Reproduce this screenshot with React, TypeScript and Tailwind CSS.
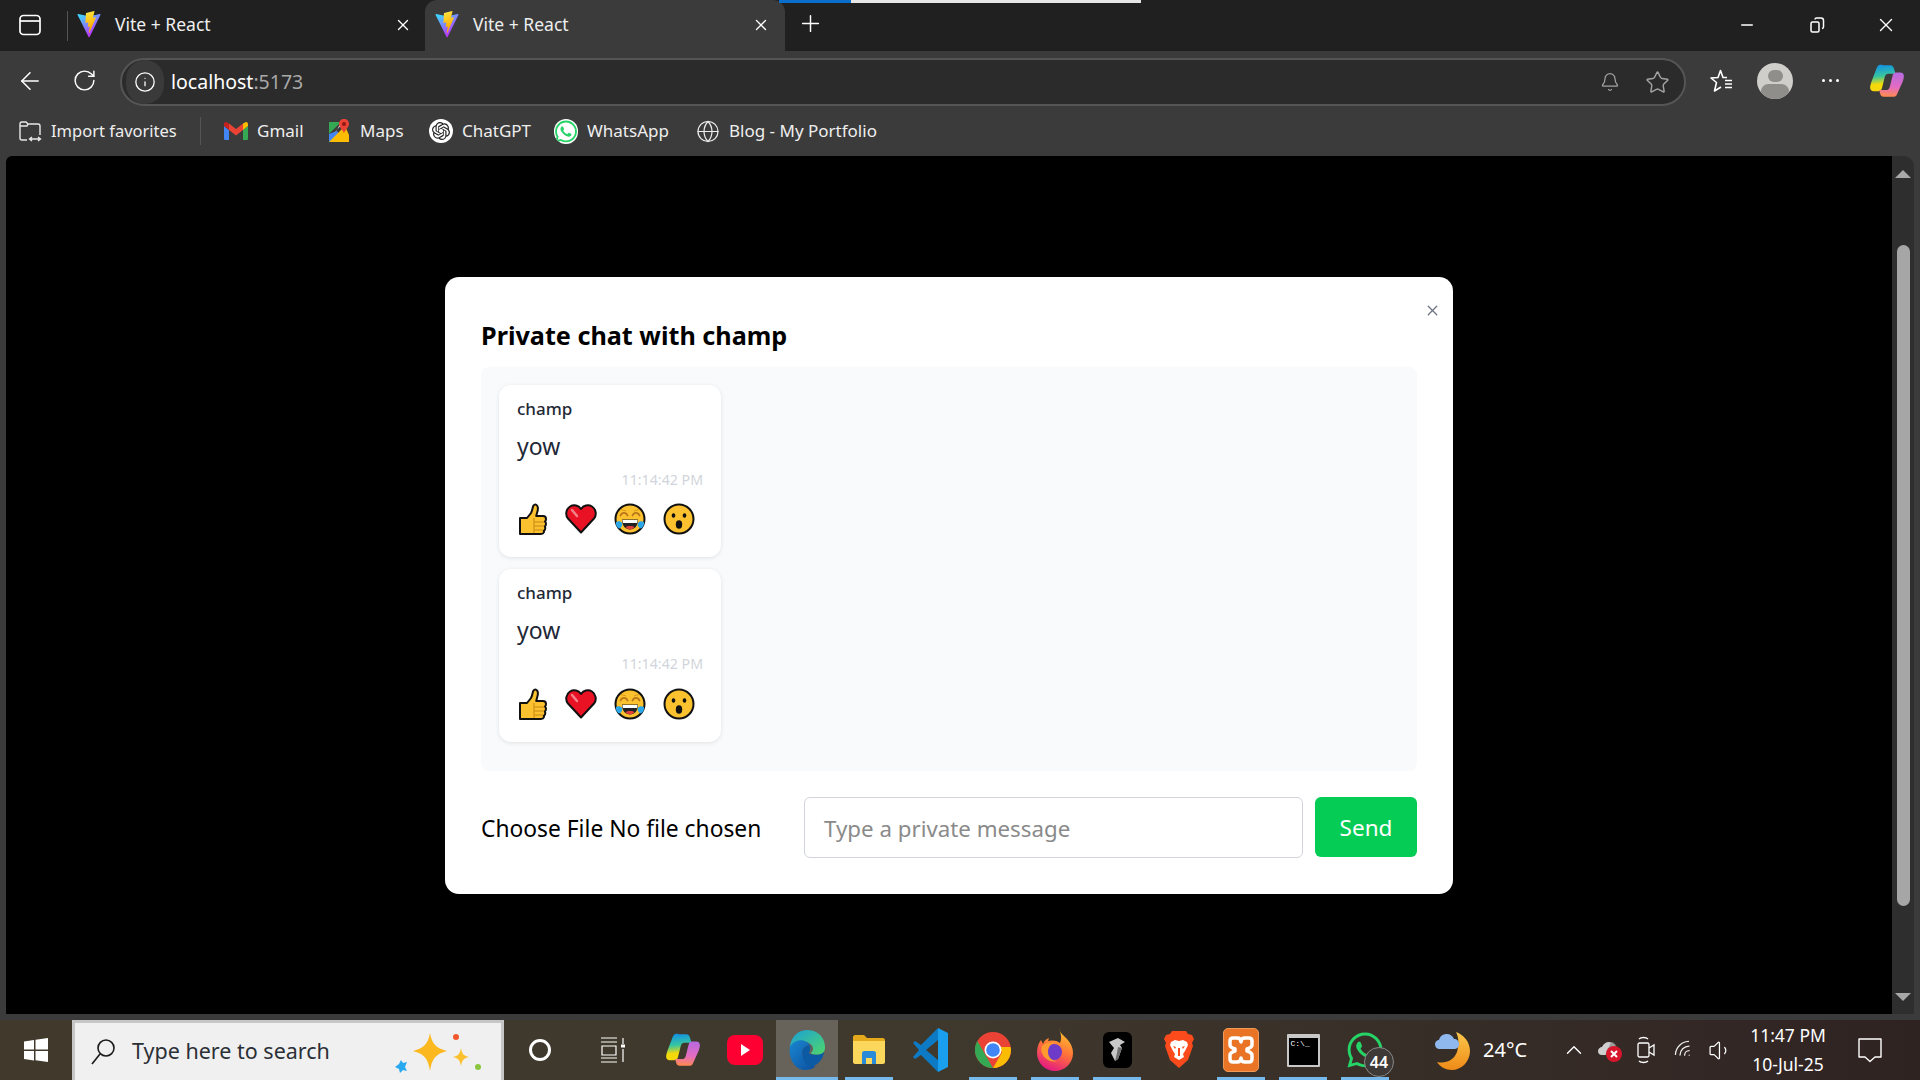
import React from "react";
import { ArrowLeft, RotateCw, Info, Bell, Star, X, Plus, Minus, Globe, ChevronUp, Wifi, Volume1 } from "lucide-react";
import { FaWhatsapp } from "react-icons/fa";
import { SiOpenai } from "react-icons/si";

const font = "font-['Noto_Sans','Open_Sans',sans-serif]";

function ViteIcon() {
  return (
    <svg width="24" height="27" viewBox="0 0 410 404" preserveAspectRatio="none" className="shrink-0">
      <defs>
        <linearGradient id="vg1" x1="0.1" y1="0.1" x2="0.6" y2="0.9"><stop offset="0" stopColor="#41D1FF" /><stop offset="1" stopColor="#BD34FE" /></linearGradient>
        <linearGradient id="vg2" x1="0.4" y1="0" x2="0.55" y2="0.8"><stop offset="0" stopColor="#FFEA83" /><stop offset="0.1" stopColor="#FFDD35" /><stop offset="1" stopColor="#FFA800" /></linearGradient>
      </defs>
      <path fill="url(#vg1)" d="M399.641 59.5246L215.643 388.545C211.844 395.338 202.084 395.378 198.228 388.618L10.5817 59.5563C6.38087 52.1896 12.6802 43.2665 21.0281 44.7586L205.223 77.6824C206.398 77.8924 207.601 77.8904 208.776 77.6763L389.119 44.8058C397.439 43.2894 403.768 52.1434 399.641 59.5246Z" />
      <path fill="url(#vg2)" d="M292.965 1.5744L156.801 28.2552C154.563 28.6937 152.906 30.5903 152.771 32.8664L144.395 174.33C144.198 177.662 147.258 180.248 150.51 179.498L188.42 170.749C191.967 169.931 195.172 173.055 194.443 176.622L183.18 231.775C182.422 235.487 185.907 238.661 189.532 237.56L212.947 230.446C216.577 229.344 220.065 232.527 219.297 236.242L201.398 322.875C200.278 328.294 207.486 331.249 210.492 326.603L212.5 323.5L323.454 102.072C325.312 98.3645 322.108 94.137 318.036 94.9228L279.014 102.454C275.347 103.161 272.227 99.746 273.262 96.1583L298.731 7.86689C299.767 4.27314 296.636 0.855181 292.965 1.5744Z" />
    </svg>
  );
}

function Copilot({ size = 32 }: { size?: number }) {
  return (
    <svg width={size} height={size} viewBox="0 0 32 32">
      <defs>
        <linearGradient id="cp1" x1="0.2" y1="0" x2="0.3" y2="1"><stop offset="0" stopColor="#0f8ee8" /><stop offset="0.45" stopColor="#37c6a0" /><stop offset="0.75" stopColor="#f5d90a" /></linearGradient>
        <linearGradient id="cp2" x1="0.6" y1="0" x2="0.5" y2="1"><stop offset="0" stopColor="#b86ae0" /><stop offset="0.6" stopColor="#e46cc0" /><stop offset="1" stopColor="#ff8a50" /></linearGradient>
      </defs>
      <path fill="url(#cp1)" d="M12 2h7c1.500 0 2.500 1 3 2.500l1.500 5h-6c-2 0-3 1-3.500 3l-2.500 10c-.4 1.500-1.500 2.500-3 2.500H4c-1.500 0-3-1-3-3 0-1 .2-2.500 1-5l5-13c1-2.500 2.500-2.500 5-2.500z" />
      <path fill="url(#cp2)" d="M20 30h-7c-1.500 0-2.500-1-3-2.500l-1-3.500h6c2 0 3-1 3.500-3l2.500-10c.4-1.500 1.500-2.500 3-2.500h4c1.500 0 3 1 3 3 0 1-.2 2.500-1 5l-5 11c-1 2.500-2.500 2.500-5 2.500z" />
    </svg>
  );
}

function Gmail() {
  return (
    <svg width="24" height="20" viewBox="0 0 24 18">
      <path fill="#4285f4" d="M1 18h4V8L0 4v12.500C0 17.300.500 18 1 18z" />
      <path fill="#34a853" d="M19 18h4c.6 0 1-.7 1-1.500V4l-5 4z" />
      <path fill="#fbbc04" d="M19 1.500V8l5-4V2c0-2-2-2.500-3-1.600z" />
      <path fill="#ea4335" d="M5 8V1.500l7 5.500 7-5.500V8l-7 5.500z" />
      <path fill="#c5221f" d="M0 2v2l5 4V1.500L3 .400C2-.5 0 0 0 2z" />
    </svg>
  );
}

function MapsIcon() {
  return (
    <svg width="22" height="24" viewBox="0 0 22 24">
      <path fill="#34a853" d="M1 3h12L1 15z" />
      <path fill="#4285f4" d="M1 15v8h9l4-4-5-7z" />
      <path fill="#fbbc04" d="M1 23L17 7l4 9v7z" />
      <path fill="#e8eaed" d="M9 11L13 3h3L5 15z" />
      <path fill="#ea4335" d="M16 0c-3 0-5 2-5 5 0 3 3 5 5 9 2-4 5-6 5-9 0-3-2-5-5-5z" />
      <circle cx="16" cy="5" r="2" fill="#8e1b12" />
    </svg>
  );
}

function ThumbEmoji() {
  return (
    <svg width="32" height="32" viewBox="0 0 32 32">
      <path fill="#fcc12e" stroke="#111" strokeWidth="2" strokeLinejoin="round" d="M4 15h7l4-5c1-2 1.500-4 2-6.500 .3-1.500 2-2.500 3.500-1.500 2 1.300 1.500 5 .5 8l-.8 3H27c2 0 3 1.500 3 3 0 1-.4 2-1 2.500 .6 .6 1 1.500 1 2.500s-.5 2-1.200 2.600c.3 .5 .5 1 .5 1.700 0 1-.6 2-1.500 2.500 .2 .5 .3 1 .1 1.500-.4 1.200-1.500 1.700-2.900 1.700H4z" />
      <path fill="none" stroke="#d99a1c" strokeWidth="1.500" d="M18 15v15M18 19h10M18 23h10M18 27h9" />
    </svg>
  );
}

function HeartEmoji() {
  return (
    <svg width="32" height="32" viewBox="0 0 32 32">
      <path fill="#e81224" stroke="#111" strokeWidth="2" strokeLinejoin="round" d="M16 29.500L3 15.500C0 12 1 6 5 3.500c4-2.300 8.500-1 11 2.500 2.500-3.500 7-4.800 11-2.500 4 2.500 5 8.500 2 12z" />
      <path fill="none" stroke="#f4808a" strokeWidth="2.500" strokeLinecap="round" d="M7 7l5 6" />
    </svg>
  );
}

function JoyEmoji() {
  return (
    <svg width="32" height="32" viewBox="0 0 32 32">
      <circle cx="16" cy="16" r="14.500" fill="#fcc12e" stroke="#111" strokeWidth="2" />
      <path fill="none" stroke="#b8771a" strokeWidth="1.800" strokeLinecap="round" d="M6.500 12.500C8 9 12 9 13.500 12.500M18.500 12.500C20 9 24 9 25.500 12.500" />
      <path fill="none" stroke="#d99a1c" strokeWidth="1" d="M7 6.500l5 1.500M25 6.500l-5 1.500" />
      <path fill="#222" d="M8 16.500h16c0 6.500-3.500 10-8 10s-8-3.500-8-10z" />
      <path fill="#fff" d="M8.500 17h15c0 1-.2 2-.5 3H9c-.3-1-.5-2-.5-3z" />
      <path fill="#e0413a" d="M11.500 24c1.500-1.500 7.500-1.500 9 0-1 1.500-3 2.500-4.500 2.500s-3.500-1-4.500-2.500z" />
      <path fill="#2aa7e8" d="M2 19c2-1.500 5-1 6 1s-.5 5-3 5.500C3 24.500 1.500 22 2 19zM30 19c-2-1.500-5-1-6 1s.5 5 3 5.500c2-1 3.500-3.500 3-6.500z" />
    </svg>
  );
}

function WowEmoji() {
  return (
    <svg width="32" height="32" viewBox="0 0 32 32">
      <circle cx="16" cy="16" r="14.500" fill="#fcc12e" stroke="#111" strokeWidth="2" />
      <ellipse cx="10.500" cy="12.500" rx="1.800" ry="2.300" fill="#111" />
      <ellipse cx="21.500" cy="12.500" rx="1.800" ry="2.300" fill="#111" />
      <ellipse cx="16" cy="21.500" rx="3.200" ry="4.200" fill="#111" />
    </svg>
  );
}

function MessageCard({ tall }: { tall?: boolean }) {
  return (
    <div className={`w-[222px] bg-white rounded-[12px] shadow-[0_1px_4px_rgba(0,0,0,0.1)] px-[18px] pt-[11px] flex flex-col ${tall ? "h-[173px]" : "h-[172px]"}`}>
      <div className="text-[17px] leading-[26px] font-medium text-[#1f2937]">champ</div>
      <div className="text-[23px] leading-[32px] mt-[8px] text-[#1f2937]">yow</div>
      <div className="text-[14.200px] leading-[20px] mt-[8px] text-right text-[#d1d5db]">11:14:42 PM</div>
      <div className={`flex items-center gap-[17px] -ml-[1px] ${tall ? "mt-[14px]" : "mt-[13px]"}`}>
        <ThumbEmoji />
        <HeartEmoji />
        <JoyEmoji />
        <WowEmoji />
      </div>
    </div>
  );
}

function Bookmark({ icon, label, w }: { icon: React.ReactNode; label: string; w: string }) {
  return (
    <div className={`flex items-center gap-[9px] ${w}`}>
      <div className="w-[24px] flex justify-center shrink-0">{icon}</div>
      <span className="text-[17px] text-[#eeeeee] whitespace-nowrap">{label}</span>
    </div>
  );
}

function TaskSlot({ children, active, highlight, w = "w-[62px]" }: { children?: React.ReactNode; active?: boolean; highlight?: boolean; w?: string }) {
  return (
    <div className={`relative ${w} h-full flex items-center justify-center shrink-0 ${highlight ? "bg-[#67635a]" : ""}`}>
      {children}
      {active && <div className={`absolute bottom-0 h-[3px] bg-[#76b9ed] ${highlight ? "left-0 right-0" : "left-[7px] right-[7px]"}`} />}
    </div>
  );
}

export default function App() {
  return (
    <div className={`w-screen h-screen overflow-hidden flex flex-col bg-black ${font}`}>
      {/* Tab strip */}
      <div className="relative h-[51px] shrink-0 bg-[#202020] flex items-end">
        <div className="absolute top-0 left-[779px] w-[72px] h-[3px] bg-[#0a6ecc]" />
        <div className="absolute top-0 left-[851px] w-[290px] h-[3px] bg-[#e6e6e6]" />
        <div className="w-[67px] h-full flex items-center pb-[2px] pl-[19px]">
          <svg width="22" height="22" viewBox="0 0 22 22" fill="none" stroke="#ffffff" strokeWidth="1.700"><rect x="1" y="1.500" width="20" height="19" rx="3.500" /><path d="M1 7h20" /></svg>
        </div>
        <div className="w-px h-[30px] bg-[#555555] self-center" />
        <div className="w-[357px] h-full flex items-center pl-[9px] pr-[13px] pb-[2px]">
          <ViteIcon />
          <span className="ml-[14px] text-[17.500px] text-[#eeeeee]">Vite + React</span>
          <X className="ml-auto text-white" size={18} strokeWidth={1.800} />
        </div>
        <div className="w-[360px] h-[51px] bg-[#3b3b3b] rounded-t-[12px] flex items-center pl-[10px] pr-[15px] pb-[2px]">
          <ViteIcon />
          <span className="ml-[14px] text-[17.500px] text-[#eeeeee]">Vite + React</span>
          <X className="ml-auto text-white" size={18} strokeWidth={1.800} />
        </div>
        <div className="ml-[12px] h-full flex items-center pb-[4px]">
          <Plus className="text-white" size={27} strokeWidth={1.300} />
        </div>
        <div className="ml-auto h-full flex items-center text-white pb-[2px]">
          <div className="w-[70px] flex justify-center"><Minus size={18} strokeWidth={2} /></div>
          <div className="w-[70px] flex justify-center">
            <svg width="18" height="18" viewBox="0 0 18 18" fill="none" stroke="#fff" strokeWidth="1.500"><rect x="3" y="6" width="8" height="10" rx="1.500" /><path d="M7 3.500c0-1 .8-1.500 1.500-1.500H13c1.500 0 2.500 1 2.500 2.500V11c0 .8-.5 1.400-1.500 1.500" /></svg>
          </div>
          <div className="w-[68px] flex justify-center"><X size={22} strokeWidth={1.500} /></div>
        </div>
      </div>

      {/* Address toolbar */}
      <div className="h-[59px] shrink-0 bg-[#3b3b3b] flex items-center">
        <div className="w-[60px] flex justify-center"><ArrowLeft className="text-white" size={28} strokeWidth={1.300} /></div>
        <div className="w-[48px] flex justify-center"><RotateCw className="text-white" size={25} strokeWidth={1.400} /></div>
        <div className="ml-[12px] w-[1566px] h-[48px] mt-[3px] rounded-full bg-[#2b2b2b] border-2 border-[#555555] flex items-center shrink-0">
          <div className="w-[38px] h-[44px] ml-[4px] rounded-full bg-[#3a3a3a] flex items-center justify-center">
            <Info className="text-white" size={22} strokeWidth={1.400} />
          </div>
          <span className="ml-[7px] text-[19.500px] text-white">localhost<span className="text-[#a8a8a8]">:5173</span></span>
          <div className="ml-auto flex items-center mr-[14px] text-[#a3a3a3]">
            <Bell size={20} strokeWidth={1.500} />
            <Star className="ml-[25px]" size={25} strokeWidth={1.400} />
          </div>
        </div>
        <div className="ml-[22px] w-[28px] flex justify-center shrink-0">
          <svg width="26" height="26" viewBox="0 0 26 26" fill="none" stroke="#fff" strokeWidth="1.600" strokeLinejoin="round"><path d="M18 9.500h-4L11.500 2.500 9 9.500 2 10l5.500 4.500L5.500 23l6.500-4" /><path d="M16 12.500h7M16 16h7M16 19.500h7" /></svg>
        </div>
        <div className="ml-[21px] w-[36px] h-[36px] rounded-full bg-[#cfcecb] overflow-hidden flex flex-col items-center shrink-0 relative">
          <div className="w-[15px] h-[17px] rounded-full bg-[#8f8e8b] mt-[7px]" />
          <div className="w-[28px] h-[20px] rounded-full bg-[#8f8e8b] mt-[2px]" />
        </div>
        <div className="ml-[29px] flex gap-[4px] shrink-0">
          <div className="w-[3px] h-[3px] rounded-full bg-white" />
          <div className="w-[3px] h-[3px] rounded-full bg-white" />
          <div className="w-[3px] h-[3px] rounded-full bg-white" />
        </div>
        <div className="ml-[30px] shrink-0"><Copilot size={36} /></div>
      </div>

      {/* Bookmarks */}
      <div className="h-[46px] shrink-0 bg-[#3b3b3b] flex items-center pl-[18px] pb-[4px]">
        <div className="flex items-center w-[182px]">
          <svg width="24" height="24" viewBox="0 0 24 24" fill="none" stroke="#e8e8e8" strokeWidth="1.400"><path d="M9 21H4c-1 0-2-1-2-2V5c0-1 1-2 2-2h4l2 2h10c1 0 2 1 2 2v9M2 7h7l1-2" /><path d="M12 20h10M14 18l-2.500 2 2.500 2M20 18l2.500 2-2.500 2" /></svg>
          <span className="ml-[9px] text-[16.500px] text-[#eeeeee] whitespace-nowrap">Import favorites</span>
        </div>
        <div className="w-px h-[28px] bg-[#555555] mr-[23px]" />
        <Bookmark icon={<Gmail />} label="Gmail" w="w-[103px]" />
        <Bookmark icon={<MapsIcon />} label="Maps" w="w-[102px]" />
        <Bookmark icon={<div className="w-[24px] h-[24px] rounded-full bg-white flex items-center justify-center"><SiOpenai className="text-[#222222]" size={18} /></div>} label="ChatGPT" w="w-[125px]" />
        <Bookmark icon={<FaWhatsapp className="text-[#25d366] bg-white rounded-full" size={25} />} label="WhatsApp" w="w-[142px]" />
        <Bookmark icon={<Globe className="text-[#eeeeee]" size={25} strokeWidth={1.200} />} label="Blog - My Portfolio" w="w-[220px]" />
      </div>

      {/* Viewport */}
      <div className="flex-1 min-h-0 bg-[#3b3b3b] flex pl-[6px] pr-[6px] pb-[6px]">
        <div className="flex-1 bg-black rounded-tl-[6px] flex items-center justify-center">
          <div className="w-[1008px] h-[617px] bg-white rounded-[14px] relative px-[36px] pt-[36px] flex flex-col">
            <X className="absolute top-[25px] right-[12px] text-[#6b7280]" size={17} strokeWidth={1.800} />
            <h2 className="text-[25.200px] leading-[44px] font-bold text-black">Private chat with champ</h2>
            <div className="mt-[10px] h-[404px] bg-[#f9fafb] rounded-[8px] p-[18px] flex flex-col gap-[12px]">
              <MessageCard />
              <MessageCard tall />
            </div>
            <div className="mt-[26px] flex items-center">
              <div className="w-[323px] text-[22.800px] text-black whitespace-nowrap pt-[4px]">Choose File No file chosen</div>
              <div className="w-[499px] h-[61px] border border-[#d1d5db] rounded-[6px] flex items-center px-[19px] pt-[3px] text-[22.300px] text-[#8a8a8a]">Type a private message</div>
              <div className="ml-[12px] w-[102px] h-[60px] bg-[#05cc55] rounded-[6px] flex items-center justify-center pt-[2px] text-[22.500px] text-white">Send</div>
            </div>
          </div>
        </div>
        <div className="w-[22px] shrink-0 bg-[#2e2e2e] rounded-tr-[10px] flex flex-col items-center pt-[14px] pb-[13px]">
          <div className="w-0 h-0 border-l-[8px] border-r-[8px] border-b-[8px] border-l-transparent border-r-transparent border-b-[#a8a8a8]" />
          <div className="w-[13px] h-[661px] mt-[67px] rounded-full bg-[#a6a6a6]" />
          <div className="mt-auto w-0 h-0 border-l-[8px] border-r-[8px] border-t-[8px] border-l-transparent border-r-transparent border-t-[#a8a8a8]" />
        </div>
      </div>

      {/* Taskbar */}
      <div className="h-[60px] shrink-0 flex items-stretch bg-gradient-to-r from-[#40392c] via-[#3f382d] to-[#2f2322]">
        <div className="w-[72px] flex items-center justify-center">
          <svg width="26" height="26" viewBox="0 0 26 26" fill="#fff"><path d="M1 4.500l10-1.500v9.500H1zM12.500 2.800L25 1v11.500H12.500zM1 14h10v9.500L1 22zM12.500 14H25v11l-12.500-1.700z" /></svg>
        </div>
        <div className="w-[432px] bg-[#f0f0f0] border-[3px] border-b-0 border-[#c6c6c6] flex items-center pl-[15px] relative shrink-0">
          <svg width="26" height="28" viewBox="0 0 26 28" fill="none" stroke="#1a1a1a" strokeWidth="1.600"><circle cx="16" cy="10" r="8" /><path d="M10 16L2 26" /></svg>
          <span className="ml-[16px] text-[21.500px] text-[#2b2f36]">Type here to search</span>
          <svg className="absolute left-[319px] top-[8px]" width="90" height="46" viewBox="0 0 90 46">
            <path fill="#fbb81f" d="M36 2c2 11 6 15 17 18-11 3-15 7-17 20-2-13-6-17-17-20 11-3 15-7 17-18z" />
            <path fill="#fbc02d" d="M67 17c1 6 3 8 8 9-5 1-7 3-8 9-1-6-3-8-8-9 5-1 7-3 8-9z" />
            <path fill="#29a9f0" d="M7 29l2 3 4-1-2 5 2 4-4-1-3 3-1-4-4-2 4-3z" />
            <circle cx="62" cy="6" r="3" fill="#f0592b" />
            <circle cx="84" cy="36" r="3" fill="#8cc63f" />
          </svg>
        </div>
        <div className="w-[72px] flex items-center justify-center shrink-0">
          <div className="w-[22px] h-[22px] rounded-full border-[3px] border-white" />
        </div>
        <div className="w-[72px] flex items-center justify-center shrink-0">
          <svg width="26" height="26" viewBox="0 0 26 26" fill="none" stroke="#fff" strokeWidth="1.200"><path d="M2 1h16M2 5h16M2 21h16M2 25h16M3 9h14v9H3zM24 1v6M24 12v13" /><rect x="22" y="7.500" width="4" height="3" fill="#fff" stroke="none" /></svg>
        </div>
        <div className="w-[4px] shrink-0" />
        <TaskSlot><Copilot size={36} /></TaskSlot>
        <TaskSlot>
          <div className="w-[36px] h-[30px] rounded-[8px] bg-[#ff0033] flex items-center justify-center">
            <div className="w-0 h-0 border-t-[6px] border-b-[6px] border-l-[9px] border-t-transparent border-b-transparent border-l-white" />
          </div>
        </TaskSlot>
        <TaskSlot active highlight>
          <svg width="38" height="44" viewBox="0 0 40 44">
            <defs>
              <linearGradient id="edge1" x1="0" y1="0" x2="1" y2="1"><stop offset="0" stopColor="#1ba0d8" /><stop offset="1" stopColor="#4ed66a" /></linearGradient>
              <linearGradient id="edge2" x1="0" y1="0" x2="1" y2="1"><stop offset="0" stopColor="#1a86d0" /><stop offset="1" stopColor="#0b4f9e" /></linearGradient>
            </defs>
            <path fill="url(#edge1)" d="M2 18C4 7 11 1 21 1c11 0 18 9 18 18 0 6-4 8-9 8-4 0-6-1-6-2 3-2 3-5 1-8-3-4-9-5-14-3-4 1-7 3-9 4z" />
            <path fill="url(#edge2)" d="M2 18c4-5 9-7 14-6 4 1 6 3 7 5-4 0-8 3-8 8 0 8 7 14 14 14-3 3-7 4-11 4C8 43 0 32 2 18z" />
            <path fill="#0c59a4" d="M15 25c0-5 4-8 8-8 1 2 1 5-1 8 0 1 2 2 6 2 5 0 8-1 10-3-1 9-9 15-13 15-7 0-10-7-10-14z" />
          </svg>
        </TaskSlot>
        <TaskSlot active>
          <svg width="34" height="32" viewBox="0 0 34 32">
            <path fill="#e5a91b" d="M1 3c0-1 1-2 2-2h9l3 3h16c1 0 2 1 2 2v3H1z" />
            <path fill="#fbd75b" d="M1 7h32v21c0 1-1 2-2 2H3c-1 0-2-1-2-2z" />
            <path fill="#2a8cd8" d="M10 19c0-1 1-2 2-2h10c1 0 2 1 2 2v11h-4v-6h-6v6h-4z" />
          </svg>
        </TaskSlot>
        <TaskSlot>
          <svg width="36" height="44" viewBox="0 0 36 44">
            <path fill="#1a9fef" d="M25 0l10 5v34l-10 5z" />
            <path fill="#0c7ac4" d="M25 0L8 17 2 13l-2 2 6 7-6 7 2 2 6-4 17 17V32L13 22 25 12z" />
          </svg>
        </TaskSlot>
        <TaskSlot active>
          <svg width="36" height="44" viewBox="0 0 36 36">
            <circle cx="18" cy="18" r="18" fill="#ea4335" />
            <path fill="#34a853" d="M18 36A18 18 0 0 1 2.400 9l8.700 15 6.900 12z" />
            <path fill="#fbbc04" d="M18 36l9-15.600-3-5.400h11.500c.3 1 .5 2 .5 3 0 10-8 18-18 18z" />
            <circle cx="18" cy="18" r="8.500" fill="#fff" />
            <circle cx="18" cy="18" r="6.800" fill="#4285f4" />
          </svg>
        </TaskSlot>
        <TaskSlot active>
          <svg width="36" height="44" viewBox="0 0 36 44">
            <defs>
              <linearGradient id="ff" x1="0.7" y1="0" x2="0.3" y2="1"><stop offset="0" stopColor="#ffc72c" /><stop offset="0.5" stopColor="#ff7139" /><stop offset="1" stopColor="#e31587" /></linearGradient>
            </defs>
            <path fill="url(#ff)" d="M22 0c1 5 4 7 8 11 4 4 6 9 6 14 0 10-8 18-18 18S0 35 0 25c0-5 1-9 4-13l2 4c1-3 3-5 6-6l-1 3c3-1 9-1 12 2 2-4 1-10-1-15z" />
            <circle cx="17" cy="24" r="8" fill="#6e3bc8" />
            <path fill="#ff9a2e" d="M5 18c3-3 8-4 12-3-3 1-6 4-6 9 0 5 4 9 9 9-6 2-13-2-15-8-1-2-1-5 0-7z" />
          </svg>
        </TaskSlot>
        <TaskSlot active>
          <div className="w-[29px] h-[36px] rounded-[6px] bg-black flex items-center justify-center">
            <svg width="18" height="26" viewBox="0 0 18 26"><path fill="#c8c8c8" d="M1 5l9-4 7 4-5 3 2 3-4 11-3 2-4-8 3-5z" /><path fill="#6f6f6f" d="M10 10l4 1-4 11-3 2 2-8z" /></svg>
          </div>
        </TaskSlot>
        <TaskSlot>
          <svg width="30" height="38" viewBox="0 0 30 38">
            <path fill="#fb4b1c" d="M8 0h14l2 3 4 1 2 4-2 4 1 3-5 14-9 8-9-8L1 15l1-3-2-4 2-4 4-1z" />
            <path fill="#fff" d="M15 10l4-1 4 2 1 3-3 6-2 3 1 3-5 3-5-3 1-3-2-3-3-6 1-3 4-2z" />
            <path fill="#fb4b1c" d="M9 15l3 1-1 2zM21 15l-3 1 1 2zM14 17h2v8h-2z" />
          </svg>
        </TaskSlot>
        <TaskSlot active>
          <div className="w-[36px] h-[44px] rounded-[5px] bg-[#ea7426] border border-[#f29a5c] flex items-center justify-center">
            <svg width="26" height="30" viewBox="0 0 26 30" fill="none" stroke="#fff" strokeWidth="3.500" strokeLinejoin="round"><path d="M9 3H5C3 3 2 4 2 6v4c0 2 2 3 5 4v2c-3 1-5 2-5 4v4c0 2 1 3 3 3h4c2 0 4-1 4-4 0 3 2 4 4 4h4c2 0 3-1 3-3v-4c0-2-2-3-5-4v-2c3-1 5-2 5-4V6c0-2-1-3-3-3h-4c-2 0-4 1-4 4 0-3-2-4-4-4z" /></svg>
          </div>
        </TaskSlot>
        <TaskSlot active>
          <div className="w-[33px] h-[33px] bg-black border-2 border-[#c8c8c8] rounded-[1px] border-t-[4px] relative">
            <span className="absolute left-[2px] top-[1px] text-[8px] leading-[10px] text-white font-['Liberation_Mono',monospace]">C:\_</span>
          </div>
        </TaskSlot>
        <TaskSlot active>
          <div className="relative">
            <FaWhatsapp className="text-[#25d366]" size={40} />
            <div className="absolute left-[19px] top-[17px] w-[30px] h-[30px] rounded-full bg-[#3d3a38] border border-[#8a8a8a] flex items-center justify-center text-[16px] font-semibold text-white">44</div>
          </div>
        </TaskSlot>
        <div className="ml-[37px] w-[40px] flex items-center justify-center shrink-0">
          <svg width="38" height="42" viewBox="0 0 38 42">
            <defs><linearGradient id="moon" x1="0.4" y1="0" x2="0.4" y2="1"><stop offset="0" stopColor="#fbc74a" /><stop offset="1" stopColor="#ef8a17" /></linearGradient></defs>
            <path fill="url(#moon)" d="M22 3c8 3 14 10 14 19 0 11-9 19-18 19C12 41 6 38 3 33c9 2 17-2 20-10 2-7 2-14-1-20z" />
            <path fill="#8fb8ee" d="M6 20c-3 0-5-2-5-5 0-2 2-4 4-4 1-4 4-6 8-6 3 0 6 2 7 5 3 0 5 2 5 5s-2 5-5 5z" />
          </svg>
        </div>
        <span className="ml-[10px] self-center text-[20px] text-white w-[50px] shrink-0">24°C</span>
        <div className="ml-[21px] w-[40px] flex items-center justify-center shrink-0"><ChevronUp className="text-white" size={26} strokeWidth={1.300} /></div>
        <div className="w-[32px] flex items-center justify-center shrink-0 relative">
          <svg width="26" height="26" viewBox="0 0 26 26"><path fill="#cfcfcf" d="M5 18c-3 0-4-2-4-4s2-4 4-4c1-3 4-5 7-5 4 0 7 3 7 7v6z" /><path fill="#8a8a8a" d="M14 5c3 0 6 3 6 7l-4 6H8z" opacity="0.7" /><circle cx="17" cy="17" r="8" fill="#d7162c" /><path stroke="#fff" strokeWidth="2" d="M14 14l6 6M20 14l-6 6" /></svg>
        </div>
        <div className="w-[40px] flex items-center justify-center shrink-0">
          <svg width="18" height="28" viewBox="0 0 18 28" fill="none" stroke="#ffffff" strokeWidth="1.300"><rect x="1" y="7" width="11" height="14" rx="1.500" /><path d="M12 12l5-3v10l-5-3M2 3c2-2 7-2 9 0M2 25c2 2 7 2 9 0" /></svg>
        </div>
        <div className="w-[35px] flex items-center justify-center shrink-0"><Wifi className="text-white -rotate-[45deg] opacity-90" size={22} strokeWidth={1.400} /></div>
        <div className="w-[38px] flex items-center justify-center shrink-0"><Volume1 className="text-white" size={25} strokeWidth={1.200} /></div>
        <div className="w-[98px] shrink-0 flex flex-col items-center justify-center text-[17.500px] leading-[29px] text-white">
          <span>11:47 PM</span>
          <span>10-Jul-25</span>
        </div>
        <div className="ml-[8px] w-[50px] flex items-center justify-center shrink-0">
          <svg width="26" height="26" viewBox="0 0 26 26" fill="none" stroke="#fff" strokeWidth="1.400" strokeLinejoin="round"><path d="M2 2h22v18h-6l-5 4.500L8 20H2z" /></svg>
        </div>
      </div>
    </div>
  );
}
